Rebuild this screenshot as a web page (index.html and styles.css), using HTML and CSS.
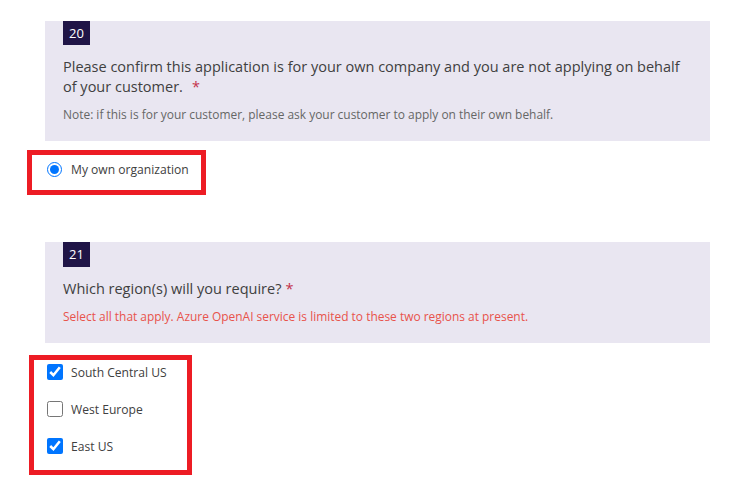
FILE: index.html
```html
<!DOCTYPE html>
<html>
<head>
<meta charset="utf-8">
<link rel="stylesheet" href="styles.css">
</head>
<body>
<div class="page">
  <section class="question q1">
    <div class="badge">20</div>
    <div class="qtext">Please confirm this application is for your own company and you are not applying on behalf of your customer.<span class="req req-wide">*</span></div>
    <div class="note">Note: if this is for your customer, please ask your customer to apply on their own behalf.</div>
  </section>
  <div class="mark mark1">
    <label class="opt"><input type="radio" name="org" checked><span>My own organization</span></label>
  </div>

  <section class="question q2">
    <div class="badge">21</div>
    <div class="qtext">Which region(s) will you require?<span class="req">*</span></div>
    <div class="note warn">Select all that apply. Azure OpenAI service is limited to these two regions at present.</div>
  </section>
  <div class="mark mark2">
    <label class="opt"><input type="checkbox" checked><span>South Central US</span></label>
    <label class="opt"><input type="checkbox"><span>West Europe</span></label>
    <label class="opt"><input type="checkbox" checked><span>East US</span></label>
  </div>
</div>
</body>
</html>
```
FILE: styles.css
```css
html, body { margin: 0; padding: 0; background: #fff; }
body { font-family: "Open Sans", "Noto Sans", sans-serif; color: #333; }
.page { padding-top: 21px; }
.question {
  margin-left: 45px;
  width: 665px;
  box-sizing: border-box;
  background: #e9e6f1;
  padding: 0 18px 18px 18px;
}
.badge {
  width: 27px;
  height: 24px;
  background: #201547;
  color: #fff;
  font-size: 13px;
  line-height: 24px;
  text-align: center;
}
.q2 .badge { height: 25px; line-height: 25px; }
.qtext {
  margin-top: 12px;
  font-size: 14.5px;
  line-height: 20px;
  color: #404040;
}
.req { color: #c4314b; margin-left: 4px; }
.req-wide { margin-left: 9px; }
.note {
  margin-top: 10px;
  font-size: 11.95px;
  line-height: 16px;
  color: #666;
}
.note.warn { color: #e8534b; }
.mark {
  border: 5px solid #ed1c24;
  box-sizing: border-box;
}
.mark1 {
  margin: 9px 0 0 27px;
  width: 179px;
  height: 45px;
  padding: 3px 0 0 15px;
}
.mark2 {
  margin: 12px 0 0 29px;
  width: 163px;
  height: 120px;
  padding: 1px 0 0 13px;
  display: flex;
  flex-direction: column;
  gap: 15px;
}
.q2 { margin-top: 47px; }
.opt {
  display: flex;
  align-items: center;
  height: 22px;
  font-size: 12.1px;
  color: #404040;
}
.opt input { margin: 0 9px 0 0; accent-color: #0075ff; }
.opt input[type=radio] { width: 15px; height: 15px; }
.opt input[type=checkbox] { width: 16px; height: 16px; margin-right: 8px; }
```
